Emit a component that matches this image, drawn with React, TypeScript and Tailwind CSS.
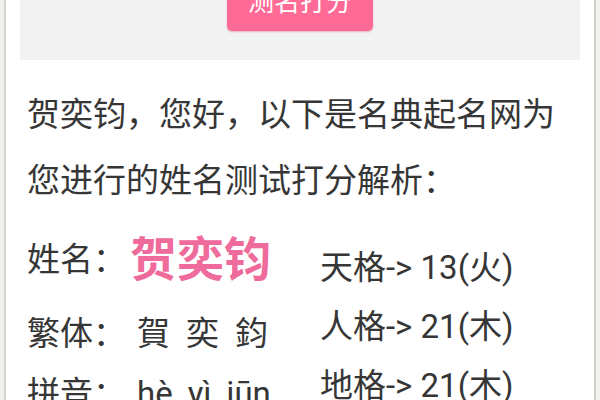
import React from "react";

const cjk = { fontFamily: 'Roboto, "Noto Sans CJK SC", sans-serif' } as React.CSSProperties;

export default function App() {
  return (
    <div className="w-[600px] h-[400px] overflow-hidden flex bg-[#f1f1ed] text-[#363636]" style={cjk}>
      <div className="w-[4px] shrink-0" />
      <div className="w-[2px] shrink-0 bg-[#d4d4d1]" />
      <div className="flex-1 bg-white flex flex-col overflow-hidden">
        <div className="mx-[14px] h-[60px] shrink-0 bg-[#f2f2f2] flex justify-center">
          <div className="-mt-[27px] h-[58px] w-[146px] rounded-[5px] bg-[#ff6b96] text-white text-[26px] leading-[58px] text-center shadow-[0_1px_2px_rgba(200,60,100,0.35)]">
            测名打分
          </div>
        </div>
        <div className="px-[21px] mt-[19px] text-[33px] leading-[66px]" style={{ fontFamily: '"Noto Sans CJK SC", sans-serif' }}>
          贺奕钧，您好，以下是名典起名网为您进行的姓名测试打分解析：
        </div>
        <div className="flex px-[21px] text-[33px]">
          <div className="w-[293px] shrink-0 flex flex-col">
            <div className="mt-[5px] h-[88px] flex items-center">
              <span>姓名：</span>
              <span className="ml-[4px] text-[47px] font-bold text-[#ee6b9c]">贺奕钧</span>
            </div>
            <div className="h-[60px] flex items-center">
              <span>繁体：</span>
              <span className="ml-[11px] flex gap-[16px]">
                <span>賀</span>
                <span>奕</span>
                <span>鈞</span>
              </span>
            </div>
            <div className="h-[60px] flex items-center">
              <span>拼音：</span>
              <span className="ml-[11px] flex gap-[15px]">
                <span>hè</span>
                <span>yì</span>
                <span>jūn</span>
              </span>
            </div>
          </div>
          <div className="flex flex-col mt-[27px] leading-[59px] whitespace-nowrap">
            <div>天格-&gt; 13(火)</div>
            <div>人格-&gt; 21(木)</div>
            <div>地格-&gt; 21(木)</div>
          </div>
        </div>
      </div>
      <div className="w-[2px] shrink-0 bg-[#cfcfcc]" />
      <div className="w-[4px] shrink-0" />
    </div>
  );
}
